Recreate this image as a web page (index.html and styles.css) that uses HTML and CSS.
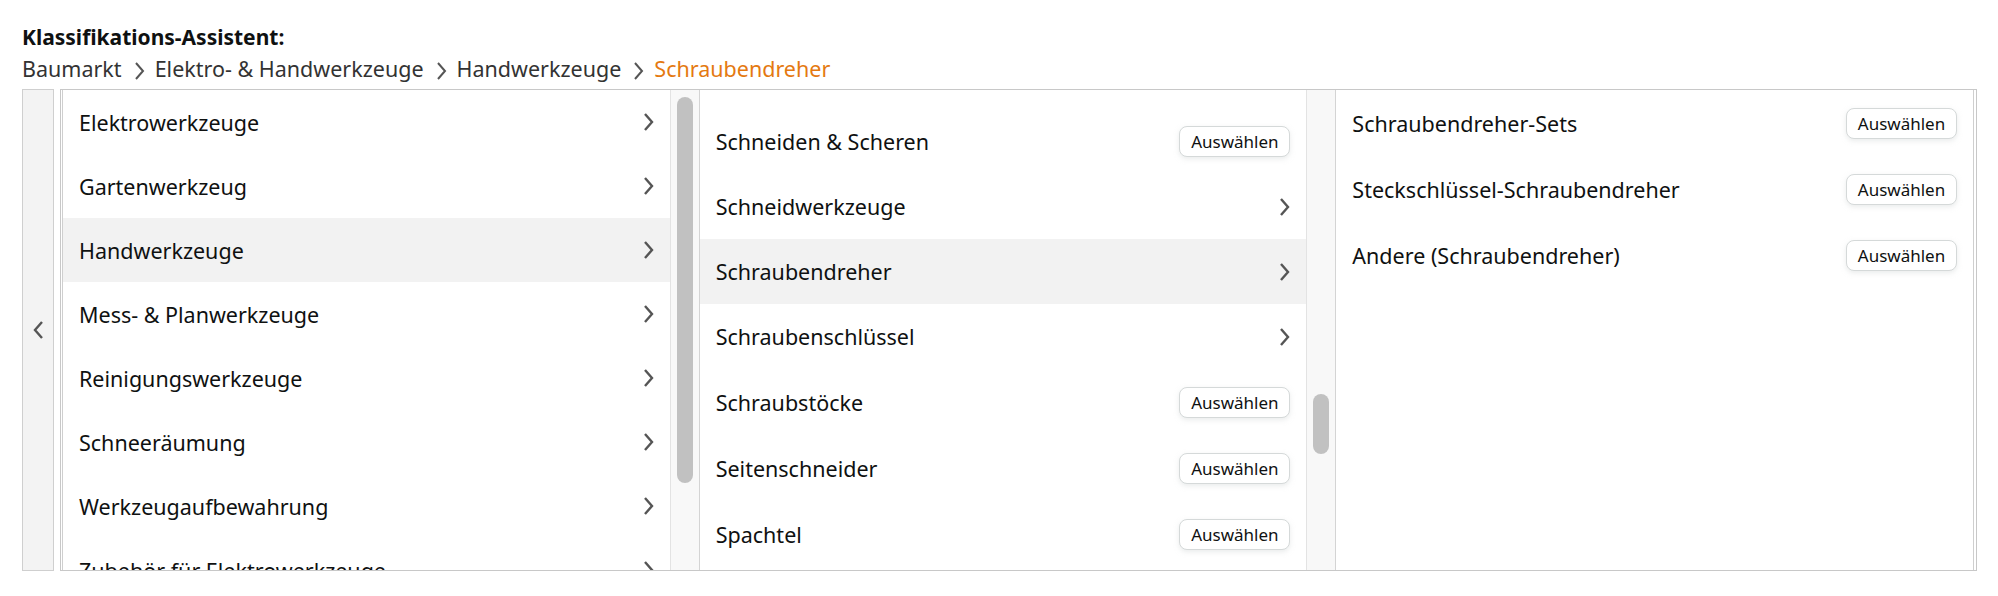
FILE: index.html
```html
<!DOCTYPE html>
<html lang="de">
<head>
<meta charset="utf-8">
<title>Klassifikations-Assistent</title>
<link rel="stylesheet" href="styles.css">
</head>
<body>
<div class="page">
  <div class="title">Klassifikations-Assistent:</div>
  <div class="crumbs">
    <span class="crumb">Baumarkt</span>
    <svg class="sep" viewBox="0 0 11 20"><polyline points="2,2 9,10 2,18"/></svg>
    <span class="crumb">Elektro- &amp; Handwerkzeuge</span>
    <svg class="sep" viewBox="0 0 11 20"><polyline points="2,2 9,10 2,18"/></svg>
    <span class="crumb">Handwerkzeuge</span>
    <svg class="sep" viewBox="0 0 11 20"><polyline points="2,2 9,10 2,18"/></svg>
    <span class="crumb current">Schraubendreher</span>
  </div>
  <div class="assistant">
    <div class="back">
      <svg class="back-icon" viewBox="0 0 13 22"><polyline points="10,3 3,11 10,19"/></svg>
    </div>
    <div class="panel">
      <div class="columns">
        <div class="col">
          <div class="list">
            <div class="row"><span class="label">Elektrowerkzeuge</span><svg class="chev" viewBox="0 0 13 22"><polyline points="3,3 10,11 3,19"/></svg></div>
            <div class="row"><span class="label">Gartenwerkzeug</span><svg class="chev" viewBox="0 0 13 22"><polyline points="3,3 10,11 3,19"/></svg></div>
            <div class="row active"><span class="label">Handwerkzeuge</span><svg class="chev" viewBox="0 0 13 22"><polyline points="3,3 10,11 3,19"/></svg></div>
            <div class="row"><span class="label">Mess- &amp; Planwerkzeuge</span><svg class="chev" viewBox="0 0 13 22"><polyline points="3,3 10,11 3,19"/></svg></div>
            <div class="row"><span class="label">Reinigungswerkzeuge</span><svg class="chev" viewBox="0 0 13 22"><polyline points="3,3 10,11 3,19"/></svg></div>
            <div class="row"><span class="label">Schneeräumung</span><svg class="chev" viewBox="0 0 13 22"><polyline points="3,3 10,11 3,19"/></svg></div>
            <div class="row"><span class="label">Werkzeugaufbewahrung</span><svg class="chev" viewBox="0 0 13 22"><polyline points="3,3 10,11 3,19"/></svg></div>
            <div class="row"><span class="label">Zubehör für Elektrowerkzeuge</span><svg class="chev" viewBox="0 0 13 22"><polyline points="3,3 10,11 3,19"/></svg></div>
          </div>
          <div class="track"><div class="thumb thumb-1"></div></div>
        </div>
        <div class="col col-mid">
          <div class="list">
            <div class="list-inner scrolled">
              <div class="row"><span class="label">Schleifwerkzeuge</span><svg class="chev" viewBox="0 0 13 22"><polyline points="3,3 10,11 3,19"/></svg></div>
              <div class="row btn-row"><span class="label">Schneiden &amp; Scheren</span><button class="pick">Auswählen</button></div>
              <div class="row"><span class="label">Schneidwerkzeuge</span><svg class="chev" viewBox="0 0 13 22"><polyline points="3,3 10,11 3,19"/></svg></div>
              <div class="row active"><span class="label">Schraubendreher</span><svg class="chev" viewBox="0 0 13 22"><polyline points="3,3 10,11 3,19"/></svg></div>
              <div class="row"><span class="label">Schraubenschlüssel</span><svg class="chev" viewBox="0 0 13 22"><polyline points="3,3 10,11 3,19"/></svg></div>
              <div class="row btn-row"><span class="label">Schraubstöcke</span><button class="pick">Auswählen</button></div>
              <div class="row btn-row"><span class="label">Seitenschneider</span><button class="pick">Auswählen</button></div>
              <div class="row btn-row"><span class="label">Spachtel</span><button class="pick">Auswählen</button></div>
            </div>
          </div>
          <div class="track"><div class="thumb thumb-2"></div></div>
        </div>
        <div class="col last">
          <div class="list">
            <div class="row btn-row"><span class="label">Schraubendreher-Sets</span><button class="pick">Auswählen</button></div>
            <div class="row btn-row"><span class="label">Steckschlüssel-Schraubendreher</span><button class="pick">Auswählen</button></div>
            <div class="row btn-row"><span class="label">Andere (Schraubendreher)</span><button class="pick">Auswählen</button></div>
          </div>
        </div>
      </div>
    </div>
  </div>
</div>
</body>
</html>
```

FILE: styles.css
```css
* { box-sizing: border-box; }
html, body { margin: 0; padding: 0; background: #fff; }
body {
  font-family: "Noto Sans", "Open Sans", Arial, sans-serif;
  color: #0f1111;
}
.page {
  padding: 23px 21px 0 22px;
}
.title {
  font-size: 21px;
  font-weight: 700;
  line-height: 28px;
  color: #0f1111;
}
.crumbs {
  display: flex;
  align-items: center;
  height: 30px;
  margin-top: 3px;
  font-size: 21.5px;
  line-height: 30px;
  color: #333;
}
.crumb.current { color: #e47911; }
.sep {
  width: 11px;
  height: 20px;
  flex: none;
  margin: 3px 10px 0 12px;
  fill: none;
  stroke: #555;
  stroke-width: 2;
}
.assistant {
  display: flex;
  height: 482px;
  margin-top: 5px;
}
.back {
  width: 32px;
  flex: none;
  margin-right: 6px;
  border: 1px solid #cfcfcf;
  background: #f3f3f3;
  display: flex;
  align-items: center;
  justify-content: center;
}
.back-icon {
  width: 13px;
  height: 22px;
  fill: none;
  stroke: #555;
  stroke-width: 2.4;
}
.panel {
  flex: 1;
  border: 1px solid #c8c8c8;
  padding: 0 2px 0 1px;
  display: flex;
}
.columns {
  flex: 1;
  display: flex;
  border-left: 1px solid #cfcfcf;
}
.col {
  flex: 1 1 0;
  min-width: 0;
  display: flex;
}
.col.last { border-right: 1px solid #cfcfcf; }
.list {
  flex: 1;
  min-width: 0;
  overflow: hidden;
}
.list-inner.scrolled { margin-top: -47px; }
.row {
  height: 64px;
  display: flex;
  align-items: center;
  justify-content: space-between;
  padding: 0 15px 0 16px;
  font-size: 21.5px;
  white-space: nowrap;
}
.col-mid .row { height: 65px; }
.row.btn-row { height: 66px; padding-right: 16px; }
.row.active { background: #f2f2f2; }
.chev {
  width: 13px;
  height: 22px;
  flex: none;
  fill: none;
  stroke: #555;
  stroke-width: 2.4;
}
.pick {
  font-family: inherit;
  font-size: 17px;
  color: #0f1111;
  background: #fff;
  border: 1px solid #d5d9d9;
  border-radius: 8px;
  box-shadow: 0 2px 5px rgba(213, 217, 217, 0.5);
  height: 31px;
  width: 111px;
  padding: 0;
}
.track {
  width: 30px;
  flex: none;
  border-left: 1px solid #e3e3e3;
  border-right: 1px solid #d4d4d4;
  background: #f8f8f8;
  display: flex;
  justify-content: center;
}
.thumb {
  width: 16px;
  background: #c1c1c1;
  border-radius: 8px;
}
.thumb-1 { margin-top: 7px; height: 386px; }
.thumb-2 { margin-top: 304px; height: 60px; }
```
